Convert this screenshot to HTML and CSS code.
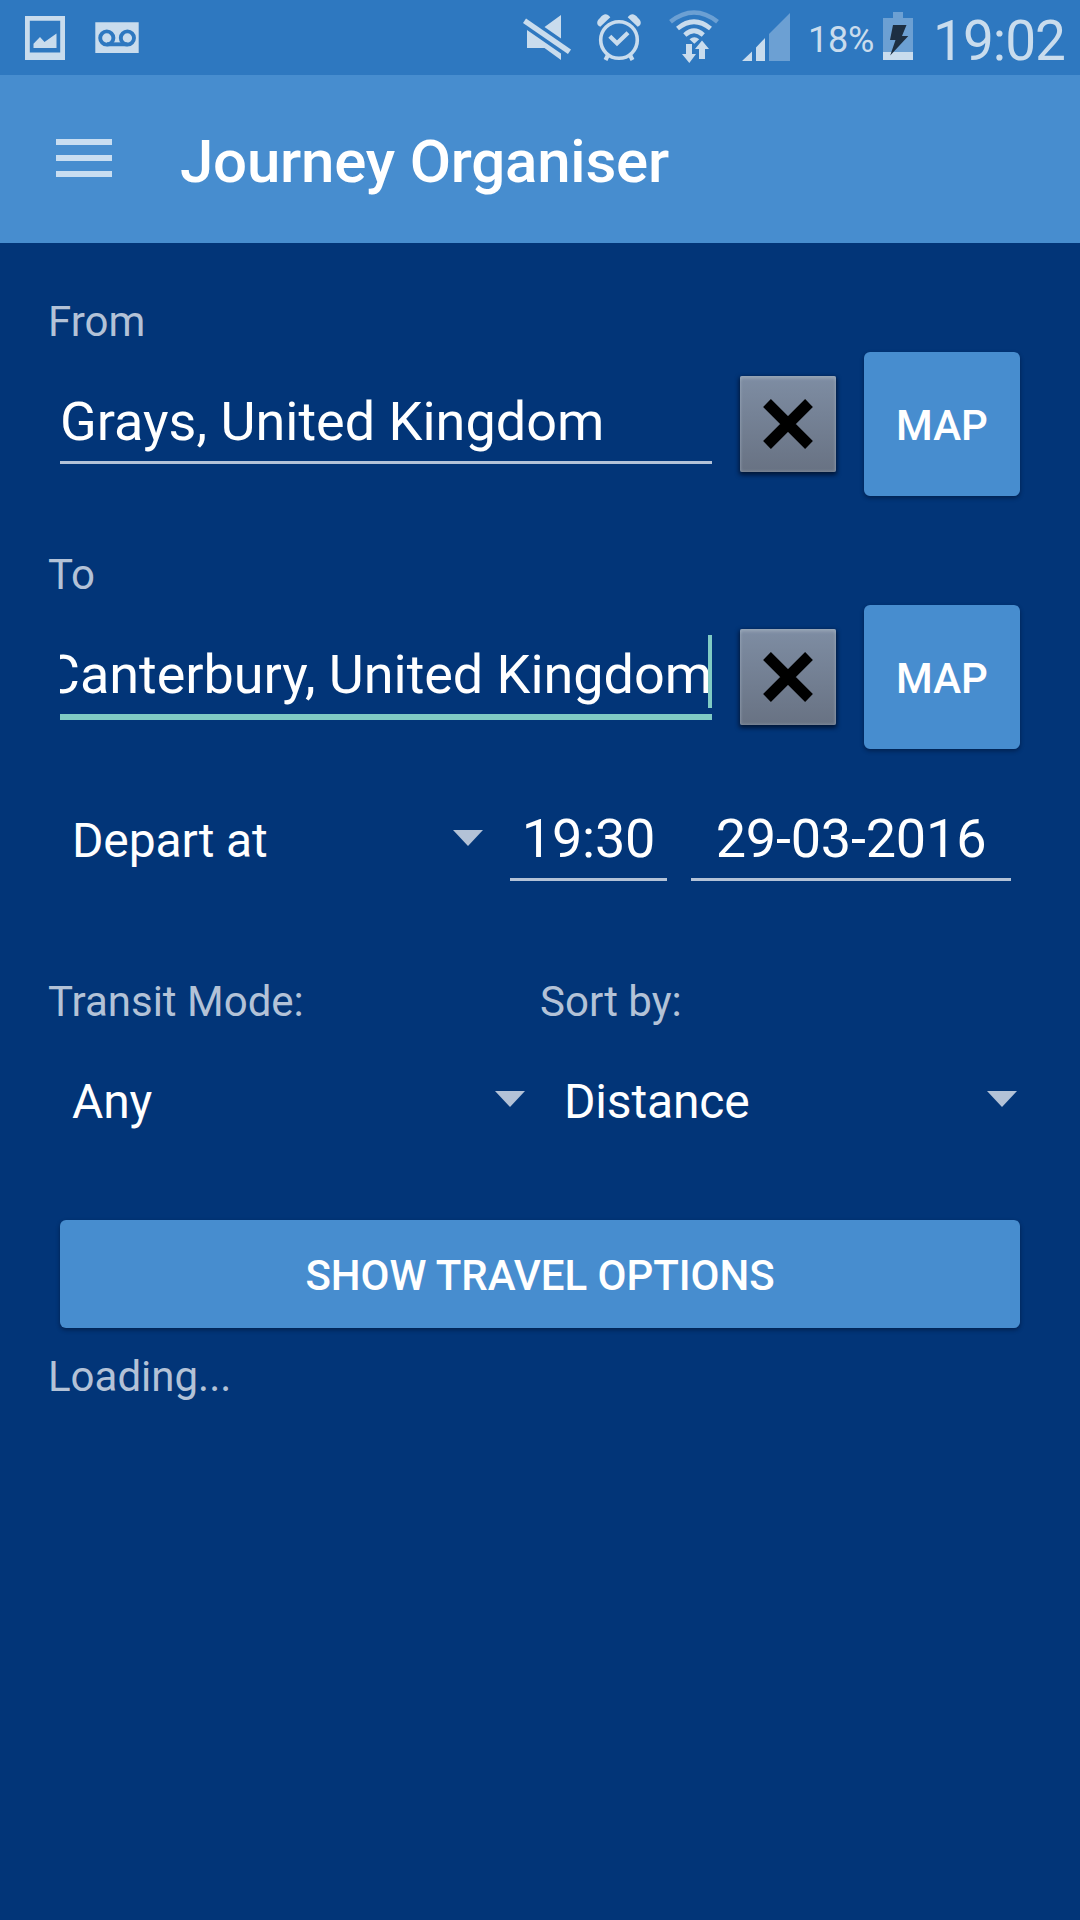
FILE: index.html
```html
<!DOCTYPE html>
<html lang="en">
<head>
<meta charset="utf-8">
<title>Journey Organiser</title>
<link rel="stylesheet" href="styles.css">
</head>
<body>
<div class="status-bar">
  <svg class="status-icon" width="40" height="75" viewBox="25 0 40 75">
    <path fill-rule="evenodd" d="M25 16H65V60H25ZM29.8 20.8V52.4H60.2V20.8Z"/>
    <path d="M33.5 48V43.8L40 37L44.5 42L56.5 33.5V48Z"/>
  </svg>
  <svg class="status-icon voicemail" width="44" height="75" viewBox="95 0 44 75">
    <path d="M95.3 22.3H138.7V53H95.3Z"/>
    <g class="cutout"><circle cx="106.8" cy="38" r="6.6"/><circle cx="127.4" cy="38" r="6.6"/><path d="M107 44.3H127.5"/></g>
  </svg>
  <svg class="status-icon mute" width="48" height="75" viewBox="523 0 48 75">
    <path d="M561 15V38.5L544.5 27ZM527 30L561 53.5V60L544.5 48H527Z"/>
    <path class="stroke" stroke-width="5.4" d="M524.5 20.8L569.5 51.8"/>
  </svg>
  <svg class="status-icon alarm" width="46" height="75" viewBox="596 0 46 75">
    <path d="M600.3 26.8L610.3 17.3C607 13 603.5 13.6 600 18C596 21.5 596.5 25 600.3 26.8Z"/>
    <path d="M637.7 26.8L627.7 17.3C631 13 634.5 13.6 638 18C642 21.5 641.5 25 637.7 26.8Z"/>
    <circle class="stroke" stroke-width="3.6" cx="619" cy="40" r="18.3"/>
    <path class="stroke" stroke-width="4.2" d="M609.8 36.3L617 43.3L628 32.8M608 55L605.5 60M630 55L632.5 60"/>
  </svg>
  <svg class="status-icon wifi" width="50" height="75" viewBox="669 0 50 75">
    <path class="stroke faint-stroke" stroke-width="4.6" d="M670.5 21.7Q694 3.3 717.5 21.7"/>
    <path class="stroke" stroke-width="4.6" d="M677.5 28.5Q694 15 710.5 28.5M684.8 35Q694 26.5 703.3 35"/>
    <path d="M689.5 39.3Q694.3 35 699.2 39.3L694.3 43.8ZM686 44H692V54H696L689.3 63L682 54H686ZM699 59V49H695L702 40.5L709 49H705V59Z"/>
  </svg>
  <svg class="status-icon signal" width="48" height="75" viewBox="742 0 48 75">
    <path d="M742 61L752 51.5V61ZM756 61V47.5L765 38V61Z"/>
    <path class="faint" d="M769 61V34L790 13V61Z"/>
  </svg>
  <span class="battery-level">18%</span>
  <svg class="status-icon battery" width="30" height="75" viewBox="883 0 30 75">
    <path class="faint" d="M893 12H903V18H913V52H883V18H893Z"/>
    <path d="M883 52H913V60H883Z"/>
    <path class="bolt" d="M893 25H906.5L902 36H908.3L890.2 55.5L895.5 40H890Z"/>
  </svg>
  <time class="clock">19:02</time>
</div>

<header class="app-bar">
  <div class="menu"><i></i><i></i><i></i></div>
  <h1 class="title">Journey Organiser</h1>
</header>

<main class="form">
  <div class="label">From</div>
  <div class="place-row">
    <div class="field place">Grays, United Kingdom</div>
    <div class="clear"><svg width="52" height="52" viewBox="0 0 52 52"><path d="M5 5L47 47M47 5L5 47"/></svg></div>
    <div class="button map">MAP</div>
  </div>

  <div class="label label-to">To</div>
  <div class="place-row">
    <div class="field place focused"><span>Canterbury, United Kingdom</span><i class="caret"></i></div>
    <div class="clear"><svg width="52" height="52" viewBox="0 0 52 52"><path d="M5 5L47 47M47 5L5 47"/></svg></div>
    <div class="button map">MAP</div>
  </div>

  <div class="time-row">
    <div class="spinner">Depart at<i class="arrow"></i></div>
    <div class="field time">19:30</div>
    <div class="field date">29-03-2016</div>
  </div>

  <div class="options">
    <div class="option">
      <div class="label">Transit Mode:</div>
      <div class="spinner">Any<i class="arrow"></i></div>
    </div>
    <div class="option">
      <div class="label">Sort by:</div>
      <div class="spinner">Distance<i class="arrow"></i></div>
    </div>
  </div>

  <div class="button submit">SHOW TRAVEL OPTIONS</div>
  <div class="label loading">Loading...</div>
</main>
</body>
</html>
```
FILE: styles.css
```css
* { box-sizing: border-box; }

body {
  margin: 0;
  width: 1080px;
  height: 1920px;
  overflow: hidden;
  background: #023578;
  color: #fff;
  font-family: Roboto, "Liberation Sans", sans-serif;
}

/* Status bar */
.status-bar {
  display: flex;
  height: 75px;
  padding-left: 25px;
  background: #2e78c0;
  color: #c9dced;
}
.status-icon { flex: none; display: block; fill: #c9dced; }
.status-icon .stroke { fill: none; stroke: #c9dced; }
.status-icon .faint { fill: #6ca0d3; }
.status-icon .faint-stroke { stroke: #6ca0d3; }
.status-icon .bolt { fill: #1d2f42; }
.status-icon .cutout { fill: none; stroke: #2e78c0; stroke-width: 3.9px; }
.voicemail { margin-left: 30px; }
.mute { margin-left: 384px; }
.alarm { margin-left: 25px; }
.wifi { margin-left: 27px; }
.signal { margin-left: 23px; }
.battery-level {
  width: 93px;
  padding-left: 18px;
  font-size: 36px;
  line-height: 81px;
  letter-spacing: -0.2px;
  white-space: nowrap;
}
.clock {
  margin-left: 20px;
  font-size: 55px;
  font-weight: 400;
  line-height: 82px;
  letter-spacing: -1px;
}

/* App bar */
.app-bar {
  display: flex;
  height: 168px;
  padding-left: 56px;
  background: #478dcf;
}
.menu {
  display: flex;
  flex-direction: column;
  gap: 10px;
  width: 56px;
  padding-top: 64px;
}
.menu i { height: 6px; background: #c8ddf1; }
.title {
  margin: 0 0 0 68px;
  font-size: 60px;
  font-weight: 500;
  line-height: 173px;
  letter-spacing: -0.22px;
}

/* Form */
.form { padding: 54px 60px 0 48px; }
.label { font-size: 42px; line-height: 49px; color: #b3c2d7; }
.label-to { margin-top: 48px; }
.place-row {
  display: flex;
  align-items: flex-start;
  height: 156px;
  padding-left: 12px;
}
.field {
  border-bottom: 3px solid #b3c2d7;
  font-size: 54px;
  line-height: 79px;
  white-space: nowrap;
}
.place { width: 652px; margin-top: 36px; }
.focused {
  position: relative;
  display: flex;
  justify-content: flex-end;
  overflow: hidden;
  border-bottom: 6px solid #80cbc4;
  letter-spacing: -0.05px;
}
.caret {
  position: absolute;
  top: 0;
  right: 0;
  width: 4px;
  height: 73px;
  background: #80cbc4;
}
.clear {
  display: flex;
  align-items: center;
  justify-content: center;
  width: 96px;
  height: 96px;
  margin: 30px 28px 0;
  border-radius: 2px;
  background: linear-gradient(#7e8da3, #687283);
  box-shadow: inset 0 0 3px 1px rgba(170, 182, 198, .35), inset 0 3px 3px rgba(170, 182, 198, .4), 0 2px 4px 1px rgba(0, 10, 30, .7);
}
.clear path { stroke: #000; stroke-width: 11px; }
.button {
  padding-top: 3px;
  border-radius: 6px;
  background: #478dcf;
  box-shadow: 0 2px 4px rgba(0, 8, 30, .45);
  font-size: 42px;
  font-weight: 500;
  text-align: center;
}
.map { width: 156px; height: 144px; margin-top: 6px; line-height: 141px; }

.time-row {
  display: flex;
  margin-top: 44px;
  padding-left: 12px;
}
.spinner {
  display: flex;
  justify-content: space-between;
  height: 83px;
  padding-left: 12px;
  font-size: 48px;
  line-height: 83px;
  letter-spacing: -0.15px;
}
.arrow {
  width: 30px;
  height: 16px;
  margin-top: 31px;
  background: #b3c2d7;
  clip-path: polygon(0 0, 100% 0, 50% 100%);
}
.time-row .spinner { width: 423px; margin-bottom: -1px; }
.time, .date { text-align: center; letter-spacing: -0.2px; }
.time { width: 157px; margin-left: 27px; }
.date { width: 320px; margin-left: 24px; }

.options {
  display: grid;
  grid-template-columns: 477px 477px;
  gap: 15px;
  margin-top: 96px;
}
.option .spinner { margin-top: 34px; padding-left: 24px; }
.submit {
  height: 108px;
  margin: 77px 0 0 12px;
  line-height: 105px;
  letter-spacing: -0.05px;
}
.loading { margin-top: 24px; }
```
